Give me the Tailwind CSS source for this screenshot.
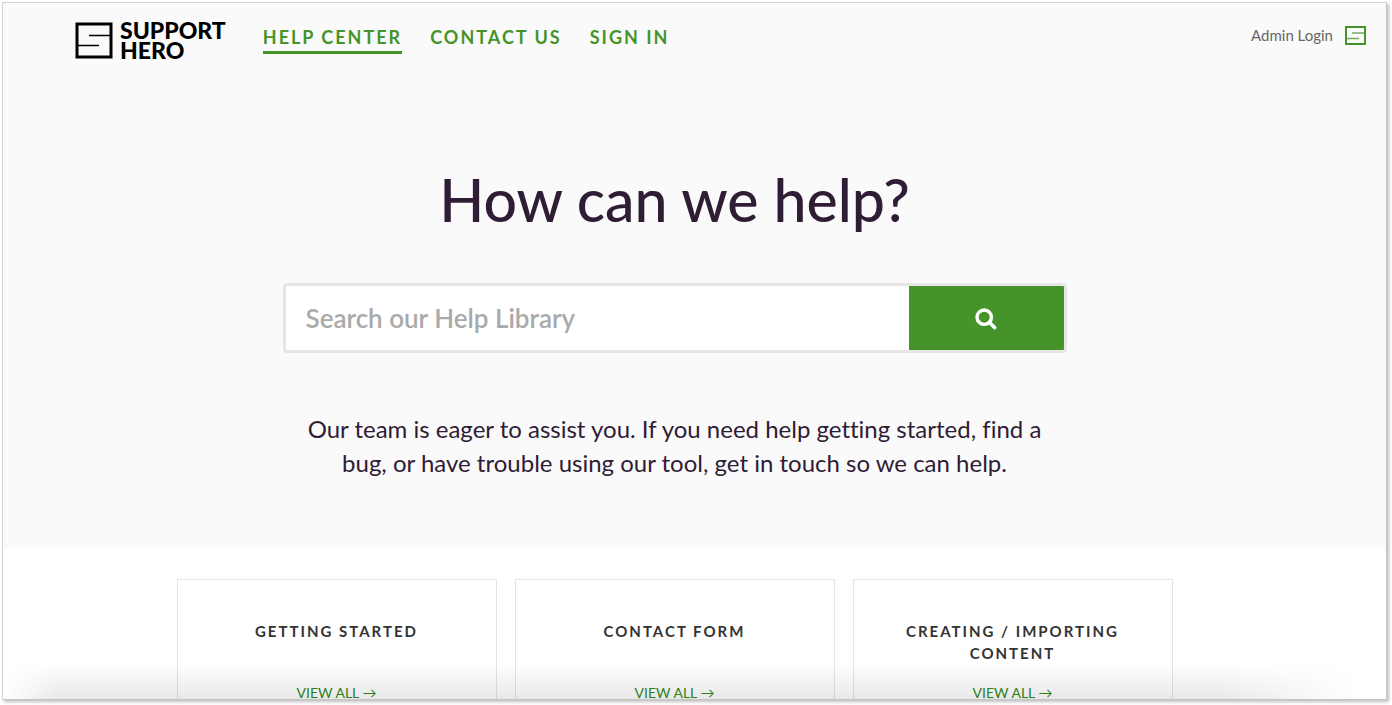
<!DOCTYPE html>
<html lang="en">
<head>
<meta charset="utf-8">
<meta name="viewport" content="width=device-width, initial-scale=1">
<title>Support Hero Help Center</title>
<script src="https://cdn.jsdelivr.net/npm/@tailwindcss/browser@4"></script>
</head>
<body class="flex h-screen flex-col overflow-hidden bg-white pt-0.5 pr-[5px] pb-[5px] pl-0.5 font-['Lato','Liberation_Sans',sans-serif] antialiased [font-variant-ligatures:no-common-ligatures]">
<div class="relative flex min-h-0 flex-1 flex-col overflow-hidden border border-[#d4d4d4] border-r-[#c4c4c4] border-b-[#c4c4c4] bg-white shadow-[2px_2px_3px_rgba(0,0,0,0.25)]">
  <div class="shrink-0 bg-[#fafafa] pb-[68px]">
    <header class="flex items-start pt-[17px] pr-5 pl-[72px]">
      <a href="#" class="flex items-center gap-[7px] text-black">
        <svg class="h-[37px] w-[38px]" viewBox="0 0 38 37" fill="none" stroke="currentColor" aria-hidden="true">
          <rect x="2" y="2" width="34" height="33" stroke-width="3"/>
          <path d="M14 13.5H36M2 23.5H24" stroke-width="1.6"/>
        </svg>
        <span class="flex flex-col text-[23px] leading-5 font-black"><span>SUPPORT</span><span>HERO</span></span>
      </a>
      <nav class="ml-[37px] flex gap-7 pt-[5px] text-[18px] leading-6 font-bold tracking-[2px] text-[#45942a]">
        <a href="#" class="border-b-3 border-[#45942a] pb-0.5">HELP CENTER</a>
        <a href="#">CONTACT US</a>
        <a href="#">SIGN IN</a>
      </nav>
      <a href="#" class="ml-auto flex items-center gap-3 pt-[5px] text-[15px] leading-5 text-[#666]">
        Admin Login
        <svg class="h-[19px] w-[21px]" viewBox="0 0 21 19" fill="none" stroke="#45942a" aria-hidden="true">
          <rect x="1" y="1" width="19" height="17" stroke-width="2"/>
          <path d="M7 7H20M1 12.5H14" stroke-width="1.4" stroke-opacity=".75"/>
        </svg>
      </a>
    </header>
    <main class="flex flex-col items-center pt-[106px] pr-10 text-center text-[#2f1c35]">
      <h1 class="text-[59px] leading-[68px] font-medium">How can we help?</h1>
      <form class="mt-[49px] flex h-[70px] w-full max-w-[784px] overflow-hidden rounded border-3 border-[#e6e6e6] bg-white">
        <input type="text" aria-label="Search our Help Library" placeholder="Search our Help Library" class="min-w-0 flex-1 px-5 text-[26px] font-semibold outline-none placeholder:text-[#aaa]">
        <button type="button" aria-label="Search" class="flex w-[155px] items-center justify-center bg-[#45942a] pt-0.5 text-white">
          <svg class="h-[22px] w-[22px]" viewBox="0 0 22 22" fill="none" stroke="currentColor" aria-hidden="true">
            <circle cx="9.2" cy="9.2" r="7.2" stroke-width="3.4"/>
            <path d="M14.5 14.5L19.6 19.6" stroke-width="3.6" stroke-linecap="round"/>
          </svg>
        </button>
      </form>
      <p class="mt-[59px] max-w-[784px] px-5 text-2xl leading-[34px]">Our team is eager to assist you. If you need help getting started, find a bug, or have trouble using our tool, get in touch so we can help.</p>
    </main>
  </div>
  <section class="shrink-0 pt-[31px] pr-10">
    <div class="mx-auto grid max-w-[996px] grid-cols-3 gap-[18px] text-center">
      <article class="flex h-[160px] flex-col items-center border border-[#e4e4e4] px-10 pt-10">
        <h2 class="h-[62px] text-[15px] leading-[22px] font-bold tracking-[2px] text-[#333]">GETTING STARTED</h2>
        <a href="#" class="text-[14px] leading-[22px] text-[#338a1c]">VIEW ALL →</a>
      </article>
      <article class="flex h-[160px] flex-col items-center border border-[#e4e4e4] px-10 pt-10">
        <h2 class="h-[62px] text-[15px] leading-[22px] font-bold tracking-[2px] text-[#333]">CONTACT FORM</h2>
        <a href="#" class="text-[14px] leading-[22px] text-[#338a1c]">VIEW ALL →</a>
      </article>
      <article class="flex h-[160px] flex-col items-center border border-[#e4e4e4] px-10 pt-10">
        <h2 class="h-[62px] text-[15px] leading-[22px] font-bold tracking-[2px] text-[#333]">CREATING / IMPORTING CONTENT</h2>
        <a href="#" class="text-[14px] leading-[22px] text-[#338a1c]">VIEW ALL →</a>
      </article>
    </div>
  </section>
  <div class="pointer-events-none absolute inset-x-0 bottom-0 h-9 bg-linear-to-t from-black/9 to-transparent mask-r-from-88% mask-r-to-98% mask-l-from-96% mask-l-to-100%"></div>
</div>
</body>
</html>
